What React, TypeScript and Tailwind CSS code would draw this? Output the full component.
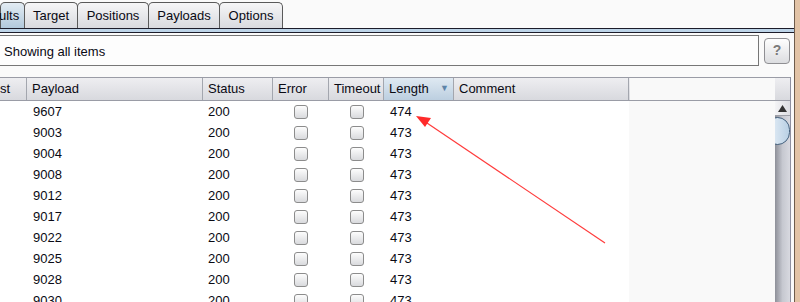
import { Fragment } from 'react';

const rows = [
  { payload: '9607', status: '200', length: '474' },
  { payload: '9003', status: '200', length: '473' },
  { payload: '9004', status: '200', length: '473' },
  { payload: '9008', status: '200', length: '473' },
  { payload: '9012', status: '200', length: '473' },
  { payload: '9017', status: '200', length: '473' },
  { payload: '9022', status: '200', length: '473' },
  { payload: '9025', status: '200', length: '473' },
  { payload: '9028', status: '200', length: '473' },
  { payload: '9030', status: '200', length: '473' },
];

const tabs = [
  { label: 'ults', w: 'w-[25px]', active: true },
  { label: 'Target', w: 'w-[54px]' },
  { label: 'Positions', w: 'w-[72px]' },
  { label: 'Payloads', w: 'w-[72px]' },
  { label: 'Options', w: 'w-[64px]' },
];

function Checkbox() {
  return (
    <div className="h-[14px] w-[14px] rounded-[3px] border border-[#8c8c8c] bg-gradient-to-b from-[#fdfdfd] to-[#d9dadd]" />
  );
}

function HeaderCell({ label, w, sorted }: { label: string; w: string; sorted?: boolean }) {
  return (
    <div
      className={`${w} flex h-full shrink-0 items-center justify-between border-r border-[#a3a6ae] pl-[5px] pr-[4px] ${
        sorted ? 'bg-gradient-to-b from-[#dfe9f2] to-[#bccfe0]' : ''
      }`}
    >
      <span>{label}</span>
      {sorted && <span className="text-[9px] text-[#5d84a8]">▼</span>}
    </div>
  );
}

export default function App() {
  return (
    <div className="relative flex h-[302px] w-[800px] overflow-hidden bg-[#fafafa] font-['Liberation_Sans',Arial,sans-serif] text-[13px] text-[#0a0a14]">
      <div className="flex w-[794px] shrink-0 flex-col">
        {/* tabs */}
        <div className="flex h-[28px] shrink-0 items-end">
          {tabs.map((t) => (
            <div
              key={t.label}
              className={`${t.w} -mr-px flex h-[26px] shrink-0 items-center rounded-t-[5px] border border-b-0 border-[#5a5a5a] ${
                t.active
                  ? 'justify-start bg-gradient-to-b from-[#e3ecf3] to-[#b2c9dc]'
                  : 'justify-center bg-gradient-to-b from-[#f6f6f7] to-[#d9dadf]'
              }`}
            >
              <span className={t.active ? '-ml-[2px]' : ''}>{t.label}</span>
            </div>
          ))}
        </div>
        <div className="h-[5px] shrink-0 border-y border-[#1c1c2a] bg-[#bdd4e8]" />

        {/* filter */}
        <div className="mt-[2px] flex h-[31px] shrink-0 items-center">
          <div className="flex h-full w-[759px] items-center border border-l-0 border-[#777] bg-[#fdfdfd] pl-[4px] pt-[2px]">
            Showing all items
          </div>
          <div className="ml-[5px] flex h-[26px] w-[26px] items-center justify-center rounded-[4px] border border-[#8f8f93] bg-gradient-to-b from-[#fefefe] to-[#dcdde0] text-[14px] font-bold text-[#7a7a7a]">
            ?
          </div>
        </div>

        {/* table */}
        <div className="mt-[11px] flex min-h-0 w-[791px] flex-1 overflow-hidden border-r border-[#8d8fa0]">
          <div className="flex flex-1 flex-col">
            <div className="flex h-[24px] shrink-0 border-y border-[#9a9ca6] bg-[#f9f9f9]">
              <div className="flex h-full w-[630px] bg-gradient-to-b from-[#eeeef1] to-[#d8d9de]">
                <div className="flex h-full w-[27px] shrink-0 items-center border-r border-[#a3a6ae]">st</div>
                <HeaderCell label="Payload" w="w-[176px]" />
                <HeaderCell label="Status" w="w-[70px]" />
                <HeaderCell label="Error" w="w-[56px]" />
                <HeaderCell label="Timeout" w="w-[55px]" />
                <HeaderCell label="Length" w="w-[70px]" sorted />
                <HeaderCell label="Comment" w="w-[175px]" />
              </div>
            </div>
            <div className="flex flex-1 bg-[#f9f9f9]">
              <div className="w-[629px] bg-white">
                {rows.map((r, i) => (
                  <Fragment key={i}>
                    <div className="flex h-[21px] items-center">
                      <div className="w-[27px] shrink-0" />
                      <div className="w-[176px] shrink-0 pl-[6px]">{r.payload}</div>
                      <div className="w-[70px] shrink-0 pl-[5px]">{r.status}</div>
                      <div className="flex w-[56px] shrink-0 justify-center">
                        <Checkbox />
                      </div>
                      <div className="flex w-[55px] shrink-0 justify-center">
                        <Checkbox />
                      </div>
                      <div className="w-[70px] shrink-0 pl-[6px]">{r.length}</div>
                    </div>
                  </Fragment>
                ))}
              </div>
            </div>
          </div>

          {/* scrollbar */}
          <div className="flex w-[15px] shrink-0 flex-col">
            <div className="h-[24px] shrink-0 border-y border-[#9a9ca6] bg-gradient-to-b from-[#eeeef1] to-[#d8d9de]" />
            <div className="flex h-[15px] shrink-0 items-center justify-center border-b border-[#9ea0a8] bg-gradient-to-r from-[#f4f4f6] to-[#dcdde2]">
              <svg width="9" height="7" viewBox="0 0 9 7">
                <polygon points="4.5,0 9,7 0,7" fill="#333" />
              </svg>
            </div>
            <div className="relative flex-1 overflow-hidden bg-gradient-to-r from-[#8e9099] via-[#c6c8d0] to-[#d8d9e0]">
              <div className="absolute top-[1px] -left-[10px] h-[28px] w-[25px] rounded-full border border-[#46627e] bg-gradient-to-r from-[#eef4fa] to-[#b9d0e4]" />
            </div>
          </div>
        </div>
      </div>
      <div className="w-px shrink-0 bg-[#6e5c4c]" />
      <div className="flex-1 bg-[#e2c3a6]" />

      {/* annotation arrow */}
      <svg className="pointer-events-none absolute inset-0" width="800" height="302">
        <line x1="605" y1="243" x2="424" y2="121" stroke="#ff3b3b" strokeWidth="1.2" />
        <polygon points="416,116 431,118 425,127" fill="#ff2a2a" />
      </svg>
    </div>
  );
}
